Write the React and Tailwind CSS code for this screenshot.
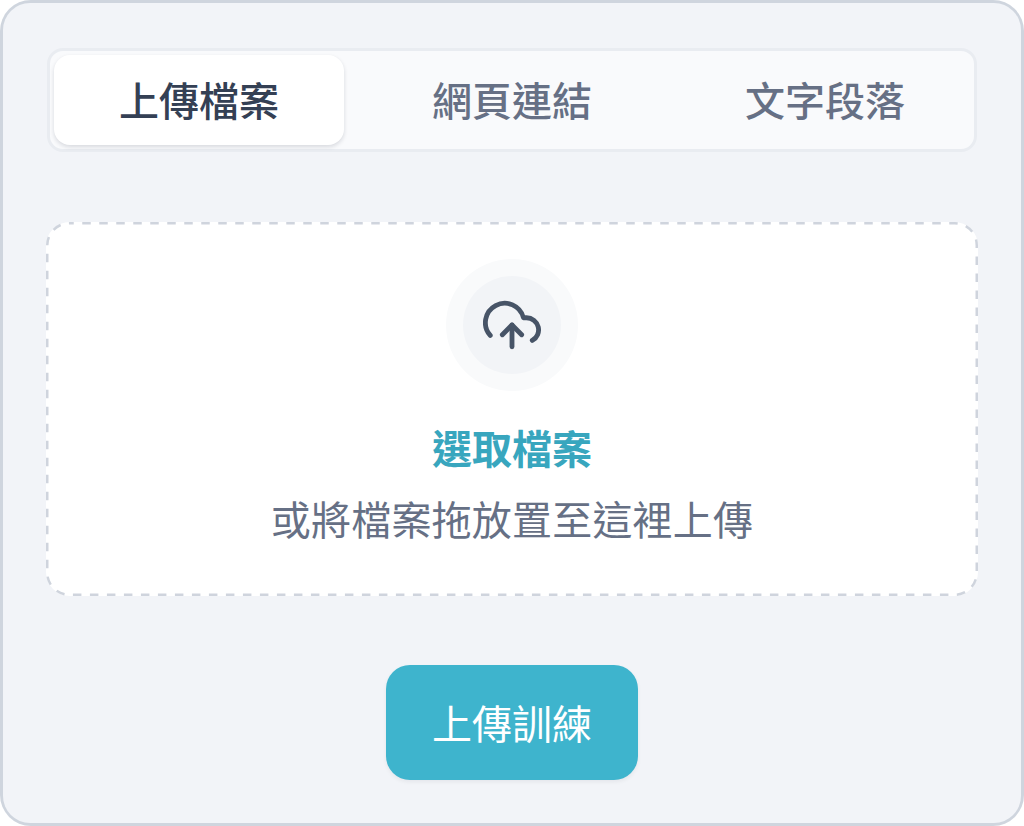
const TABS = ['上傳檔案', '網頁連結', '文字段落'];

export default function App() {
  return (
    <div className="h-[826px] w-[1024px] bg-white font-['Inter','Noto_Sans_CJK_TC',sans-serif]">
      <div className="h-full rounded-[31px] bg-[#cfd5de] p-[3px]">
        <div className="flex h-full flex-col items-center rounded-[27px] bg-[#f2f4f8] pt-[45px]">
          <div className="flex h-[104px] w-[930px] shrink-0 gap-[23px] rounded-[16px] border-[3px] border-[#e9ecf1] bg-[#f9fafc] p-1">
            {TABS.map((tab, i) => (
              <div
                key={tab}
                className={
                  i === 0
                    ? 'flex h-[90px] flex-1 items-center justify-center rounded-[16px] bg-white pt-1 text-[40px] font-medium text-[#344054] shadow-[0_2px_4px_rgba(16,24,40,0.14)]'
                    : 'flex h-[90px] flex-1 items-center justify-center pt-1 text-[40px] font-medium text-[#667085]'
                }
              >
                {tab}
              </div>
            ))}
          </div>

          <div className="relative mt-[70px] flex h-[374px] w-[932px] shrink-0 flex-col items-center rounded-[24px] bg-white pt-[37px]">
            {/* dashed outline: the browser's own dashes come out too short */}
            <svg className="absolute inset-0" width="932" height="374" fill="none">
              <rect x="1.25" y="1.25" width="929.5" height="371.5" rx="22" stroke="#cfd4dd" strokeWidth="2.5" strokeDasharray="8.5 8.5" strokeDashoffset="4" />
            </svg>
            <div className="flex h-[132px] w-[132px] items-center justify-center rounded-full bg-[#f9fafb]">
              <div className="flex h-[98px] w-[98px] items-center justify-center rounded-full bg-[#f2f4f7]">
                <svg width="58" height="58" viewBox="0 0 24 24" fill="none" stroke="#475467" strokeWidth="2" strokeLinecap="round" strokeLinejoin="round">
                  <path d="M8 16l4-4 4 4" />
                  <path d="M12 12v9" />
                  <path d="M20.39 18.39A5 5 0 0 0 18 9h-1.26A8 8 0 1 0 3 16.3" />
                </svg>
              </div>
            </div>
            <div className="mt-[29px] text-[40px] leading-[60px] font-semibold text-[#38a6be]">選取檔案</div>
            <div className="mt-[11px] text-[40px] leading-[60px] tracking-[0.2px] text-[#667085]">或將檔案拖放置至這裡上傳</div>
          </div>

          <button
            type="button"
            className="mt-[69px] flex h-[115px] w-[252px] shrink-0 items-center justify-center rounded-[24px] bg-[#3eb4cd] pt-[5px] text-[40px] font-normal text-white shadow-[0_2px_4px_rgba(16,24,40,0.06)]"
          >
            上傳訓練
          </button>
        </div>
      </div>
    </div>
  );
}
